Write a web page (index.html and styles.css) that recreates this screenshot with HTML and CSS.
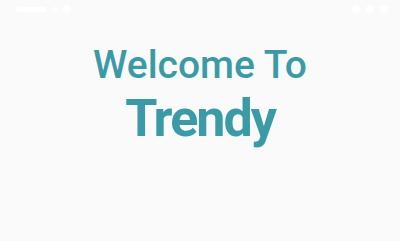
FILE: index.html
```html
<!DOCTYPE html>
<html lang="en">
<head>
  <meta charset="UTF-8">
  <meta name="viewport" content="width=device-width, initial-scale=1.0">
  <title>Trendy</title>
  <link rel="stylesheet" href="styles.css">
</head>
<body>
  <!-- Status bar (white icons on light background) -->
  <div class="status-bar">
    <div class="status-left">
      <span class="dot wide"></span>
      <span class="dot small"></span>
      <span class="dot"></span>
    </div>
    <div class="status-right">
      <span class="dot"></span>
      <span class="dot"></span>
      <span class="dot"></span>
    </div>
  </div>

  <div class="welcome">
    <h1 class="line-one">Welcome To</h1>
    <h2 class="line-two">Trendy</h2>
  </div>
</body>
</html>
```

FILE: styles.css
```css
body {
  margin: 0;
  width: 400px;
  height: 241px;
  background-color: #fafafa;
  font-family: 'Roboto', sans-serif;
  overflow: hidden;
}
.status-bar {
  height: 18px;
  display: flex;
  justify-content: space-between;
  align-items: center;
  padding: 0 12px 0 16px;
}
.status-left, .status-right {
  display: flex;
  align-items: center;
  gap: 6px;
}
.dot {
  width: 8px;
  height: 8px;
  border-radius: 50%;
  background: #ffffff;
}
.dot.wide {
  width: 30px;
  height: 5px;
  border-radius: 2px;
}
.dot.small {
  width: 5px;
  height: 5px;
}
.welcome {
  text-align: center;
  color: #3a9ba6;
  padding-top: 25px;
}
.line-one {
  margin: 0;
  font-size: 39px;
  font-weight: 500;
  line-height: 44px;
}
.line-two {
  margin: 4px 0 0;
  font-size: 52px;
  font-weight: 700;
  line-height: 56px;
  letter-spacing: -2px;
}
```
